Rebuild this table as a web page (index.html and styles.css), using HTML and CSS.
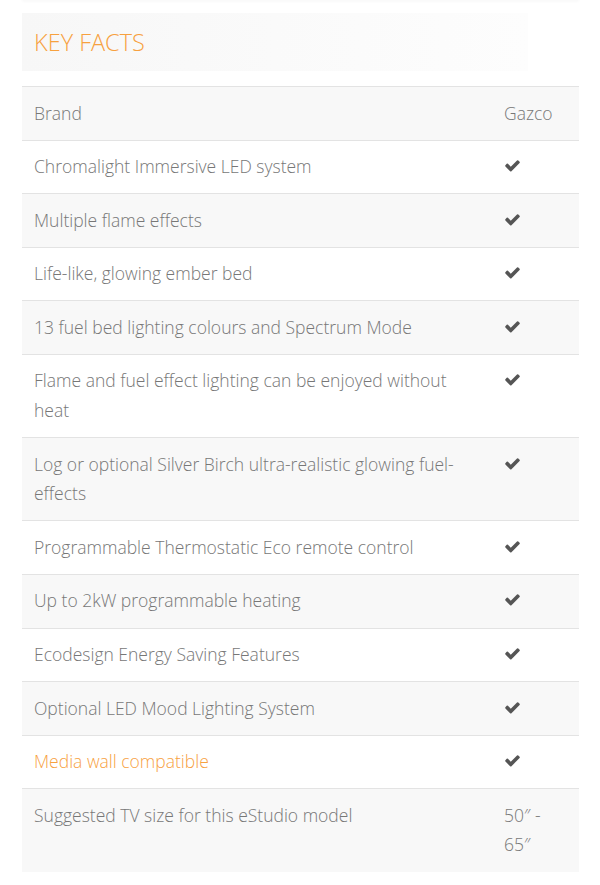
FILE: index.html
```html
<!DOCTYPE html>
<html>
<head>
<meta charset="utf-8">
<link rel="stylesheet" href="styles.css">
</head>
<body>
<div class="page">
  <div class="card-above"></div>
  <div class="facts-head"><h2>KEY FACTS</h2></div>
  <table class="facts">
    <tbody>
      <tr><td>Brand</td><td class="val">Gazco</td></tr>
      <tr><td>Chromalight Immersive LED system</td><td class="val"><svg class="tick" viewBox="0 0 1792 1792"><path d="M1671 566q0 40-28 68l-724 724-136 136q-28 28-68 28t-68-28l-136-136-362-362q-28-28-28-68t28-68l136-136q28-28 68-28t68 28l294 295 656-657q28-28 68-28t68 28l136 136q28 28 28 68z"/></svg></td></tr>
      <tr><td>Multiple flame effects</td><td class="val"><svg class="tick" viewBox="0 0 1792 1792"><path d="M1671 566q0 40-28 68l-724 724-136 136q-28 28-68 28t-68-28l-136-136-362-362q-28-28-28-68t28-68l136-136q28-28 68-28t68 28l294 295 656-657q28-28 68-28t68 28l136 136q28 28 28 68z"/></svg></td></tr>
      <tr><td>Life-like, glowing ember bed</td><td class="val"><svg class="tick" viewBox="0 0 1792 1792"><path d="M1671 566q0 40-28 68l-724 724-136 136q-28 28-68 28t-68-28l-136-136-362-362q-28-28-28-68t28-68l136-136q28-28 68-28t68 28l294 295 656-657q28-28 68-28t68 28l136 136q28 28 28 68z"/></svg></td></tr>
      <tr><td>13 fuel bed lighting colours and Spectrum Mode</td><td class="val"><svg class="tick" viewBox="0 0 1792 1792"><path d="M1671 566q0 40-28 68l-724 724-136 136q-28 28-68 28t-68-28l-136-136-362-362q-28-28-28-68t28-68l136-136q28-28 68-28t68 28l294 295 656-657q28-28 68-28t68 28l136 136q28 28 28 68z"/></svg></td></tr>
      <tr><td>Flame and fuel effect lighting can be enjoyed without heat</td><td class="val"><svg class="tick" viewBox="0 0 1792 1792"><path d="M1671 566q0 40-28 68l-724 724-136 136q-28 28-68 28t-68-28l-136-136-362-362q-28-28-28-68t28-68l136-136q28-28 68-28t68 28l294 295 656-657q28-28 68-28t68 28l136 136q28 28 28 68z"/></svg></td></tr>
      <tr><td>Log or optional Silver Birch ultra-realistic glowing fuel-effects</td><td class="val"><svg class="tick" viewBox="0 0 1792 1792"><path d="M1671 566q0 40-28 68l-724 724-136 136q-28 28-68 28t-68-28l-136-136-362-362q-28-28-28-68t28-68l136-136q28-28 68-28t68 28l294 295 656-657q28-28 68-28t68 28l136 136q28 28 28 68z"/></svg></td></tr>
      <tr><td>Programmable Thermostatic Eco remote control</td><td class="val"><svg class="tick" viewBox="0 0 1792 1792"><path d="M1671 566q0 40-28 68l-724 724-136 136q-28 28-68 28t-68-28l-136-136-362-362q-28-28-28-68t28-68l136-136q28-28 68-28t68 28l294 295 656-657q28-28 68-28t68 28l136 136q28 28 28 68z"/></svg></td></tr>
      <tr><td>Up to 2kW programmable heating</td><td class="val"><svg class="tick" viewBox="0 0 1792 1792"><path d="M1671 566q0 40-28 68l-724 724-136 136q-28 28-68 28t-68-28l-136-136-362-362q-28-28-28-68t28-68l136-136q28-28 68-28t68 28l294 295 656-657q28-28 68-28t68 28l136 136q28 28 28 68z"/></svg></td></tr>
      <tr><td>Ecodesign Energy Saving Features</td><td class="val"><svg class="tick" viewBox="0 0 1792 1792"><path d="M1671 566q0 40-28 68l-724 724-136 136q-28 28-68 28t-68-28l-136-136-362-362q-28-28-28-68t28-68l136-136q28-28 68-28t68 28l294 295 656-657q28-28 68-28t68 28l136 136q28 28 28 68z"/></svg></td></tr>
      <tr><td>Optional LED Mood Lighting System</td><td class="val"><svg class="tick" viewBox="0 0 1792 1792"><path d="M1671 566q0 40-28 68l-724 724-136 136q-28 28-68 28t-68-28l-136-136-362-362q-28-28-28-68t28-68l136-136q28-28 68-28t68 28l294 295 656-657q28-28 68-28t68 28l136 136q28 28 28 68z"/></svg></td></tr>
      <tr><td><a class="hl" href="#">Media wall compatible</a></td><td class="val"><svg class="tick" viewBox="0 0 1792 1792"><path d="M1671 566q0 40-28 68l-724 724-136 136q-28 28-68 28t-68-28l-136-136-362-362q-28-28-28-68t28-68l136-136q28-28 68-28t68 28l294 295 656-657q28-28 68-28t68 28l136 136q28 28 28 68z"/></svg></td></tr>
      <tr><td>Suggested TV size for this eStudio model</td><td class="val">50″ - 65″</td></tr>
    </tbody>
  </table>
</div>
</body>
</html>
```

FILE: styles.css
```css
* { box-sizing: border-box; }
html, body { margin: 0; padding: 0; background: #fff; }
body {
  font-family: "Open Sans", "Liberation Sans", sans-serif;
  font-weight: 300;
  color: #777;
}
.page {
  padding: 0 21px 0 22px;
}
.card-above {
  height: 1px;
  margin-top: -1px;
  box-shadow: 0 1px 3px rgba(0,0,0,0.08);
}
.facts-head {
  margin-top: 13px;
  width: 506px;
  height: 58px;
  background: linear-gradient(to right, #f7f7f7 0%, #fafafa 50%, #fdfdfd 100%);
  padding: 0 12px;
  display: flex;
  align-items: center;
}
.facts-head h2 {
  margin: 0;
  font-size: 23.5px;
  font-weight: 300;
  color: #f7a13f;
}
.facts {
  margin-top: 15px;
  width: 100%;
  border-collapse: collapse;
  font-size: 17.5px;
  line-height: 29.6px;
}
.facts td {
  border-top: 1px solid #e3e3e3;
  padding: 11.5px 12px;
  vertical-align: top;
}
.facts tr:nth-child(odd) td { background: #f8f8f8; }
.facts td.val { width: 87px; }
.tick {
  width: 17px;
  height: 17px;
  fill: #555;
  vertical-align: -1px;
}
.hl {
  color: #f7a13f;
  text-decoration: none;
}
```
